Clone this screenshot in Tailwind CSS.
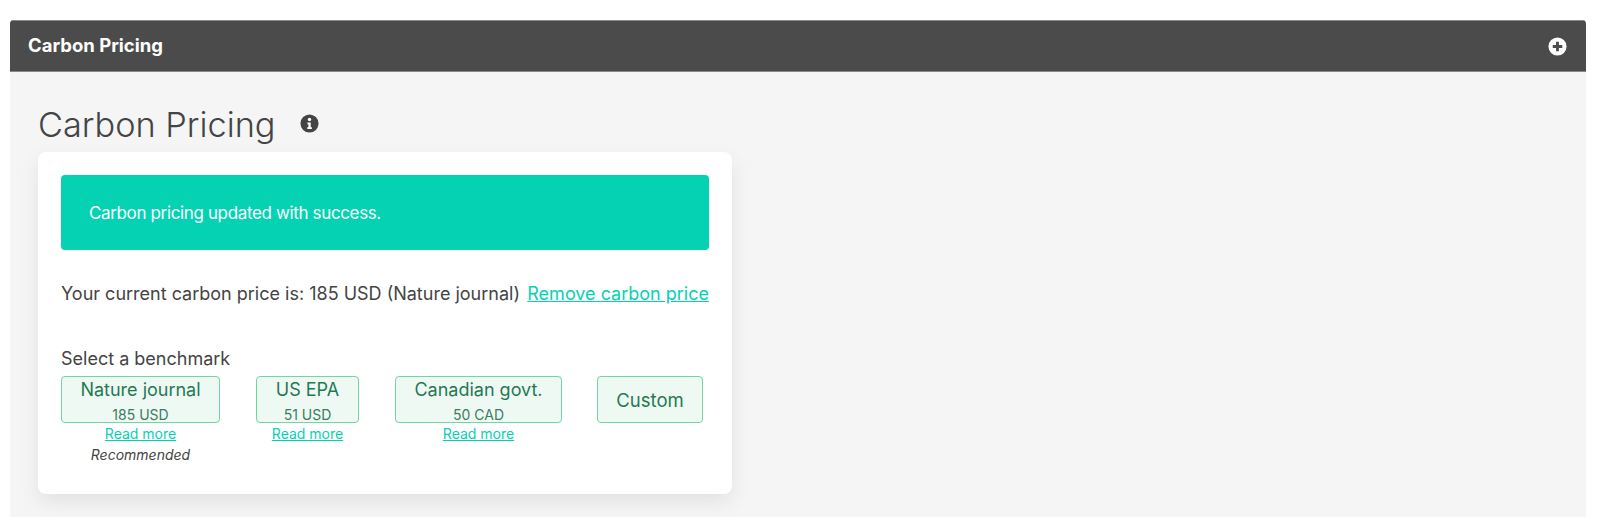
<!DOCTYPE html>
<html lang="en">
  <head>
    <meta charset="UTF-8" />
    <meta name="viewport" content="width=device-width, initial-scale=1.0" />
    <script src="https://cdn.jsdelivr.net/npm/@tailwindcss/browser@4"></script>
    <title>Carbon Pricing</title>
  </head>
  <body class="bg-white font-['Inter',sans-serif] text-[#444444] h-[517px] overflow-hidden">
    <div class="pt-5 pl-2.5 pr-3.5">
      <div class="h-[497px] bg-[#f5f5f5] rounded-t overflow-hidden">
        <div class="h-[52px] bg-[#4b4b4b] flex items-center justify-between pl-[18px] pr-[19px] border-t border-b border-t-[#8a8a8a] border-b-[#8a8a8a]">
          <span class="text-white font-bold text-[18.5px]">Carbon Pricing</span>
          <svg class="w-[19px] h-[19px]" viewBox="0 0 20 20">
            <circle cx="10" cy="10" r="9.5" fill="#ffffff" />
            <path d="M10 5v10M5 10h10" stroke="#4b4b4b" stroke-width="3" />
          </svg>
        </div>
        <div class="pl-7 pt-[28px]">
          <div class="flex items-center h-[52px]">
            <h1 class="text-[34.3px] leading-[44px] font-light text-[#444444] mb-0.5">Carbon Pricing</h1>
            <svg class="w-[19px] h-[19px] ml-6 mb-1.5" viewBox="0 0 20 20">
              <circle cx="10" cy="10" r="9.5" fill="#444444" />
              <circle cx="10" cy="5.8" r="1.8" fill="#ffffff" />
              <path d="M7.8 9h3.5v5h1.2v1.8H7.6V14h1.2v-3.2h-1z" fill="#ffffff" />
            </svg>
          </div>
          <div class="w-[694px] h-[342px] bg-white rounded-lg shadow-[0_8px_20px_rgba(0,0,0,0.08)] px-[23px] pt-[23px]">
            <div class="h-[75px] bg-[#04d2b2] rounded flex items-center pl-7 pt-0.5 text-white text-[17px] tracking-[-0.36px]">Carbon pricing updated with success.</div>
            <div class="flex justify-between items-center mt-[31px] h-6 text-[18px] whitespace-nowrap">
              <span>Your current carbon price is: 185 USD (Nature journal)</span>
              <a href="#" class="text-[#04d2b2] underline">Remove carbon price</a>
            </div>
            <p class="mt-[42px] text-[18px] leading-6">Select a benchmark</p>
            <div class="flex mt-[5px] text-center">
              <div class="w-[159px] mr-9">
                <div class="h-[47px] bg-[#eff9f4] border border-[#6fd6a4] rounded text-[#1f7a53] flex flex-col items-center">
                  <span class="text-[18px] leading-6 mt-px">Nature journal</span>
                  <span class="text-[14px] leading-4 mt-[5px] text-[#3a7d60]">185 USD</span>
                </div>
                <a href="#" class="block text-[#04d2b2] underline text-[14px] leading-5 mt-px">Read more</a>
                <p class="italic text-[14px] leading-5 mt-px">Recommended</p>
              </div>
              <div class="w-[103px] mr-9">
                <div class="h-[47px] bg-[#eff9f4] border border-[#6fd6a4] rounded text-[#1f7a53] flex flex-col items-center">
                  <span class="text-[18px] leading-6 mt-px">US EPA</span>
                  <span class="text-[14px] leading-4 mt-[5px] text-[#3a7d60]">51 USD</span>
                </div>
                <a href="#" class="block text-[#04d2b2] underline text-[14px] leading-5 mt-px">Read more</a>
              </div>
              <div class="w-[167px] mr-[35px]">
                <div class="h-[47px] bg-[#eff9f4] border border-[#6fd6a4] rounded text-[#1f7a53] flex flex-col items-center">
                  <span class="text-[18px] leading-6 mt-px">Canadian govt.</span>
                  <span class="text-[14px] leading-4 mt-[5px] text-[#3a7d60]">50 CAD</span>
                </div>
                <a href="#" class="block text-[#04d2b2] underline text-[14px] leading-5 mt-px">Read more</a>
              </div>
              <div class="w-[106px]">
                <div class="h-[47px] pt-0.5 bg-[#eff9f4] border border-[#6fd6a4] rounded text-[#1f7a53] flex items-center justify-center text-[18.5px]">Custom</div>
              </div>
            </div>
          </div>
        </div>
      </div>
    </div>
  </body>
</html>
